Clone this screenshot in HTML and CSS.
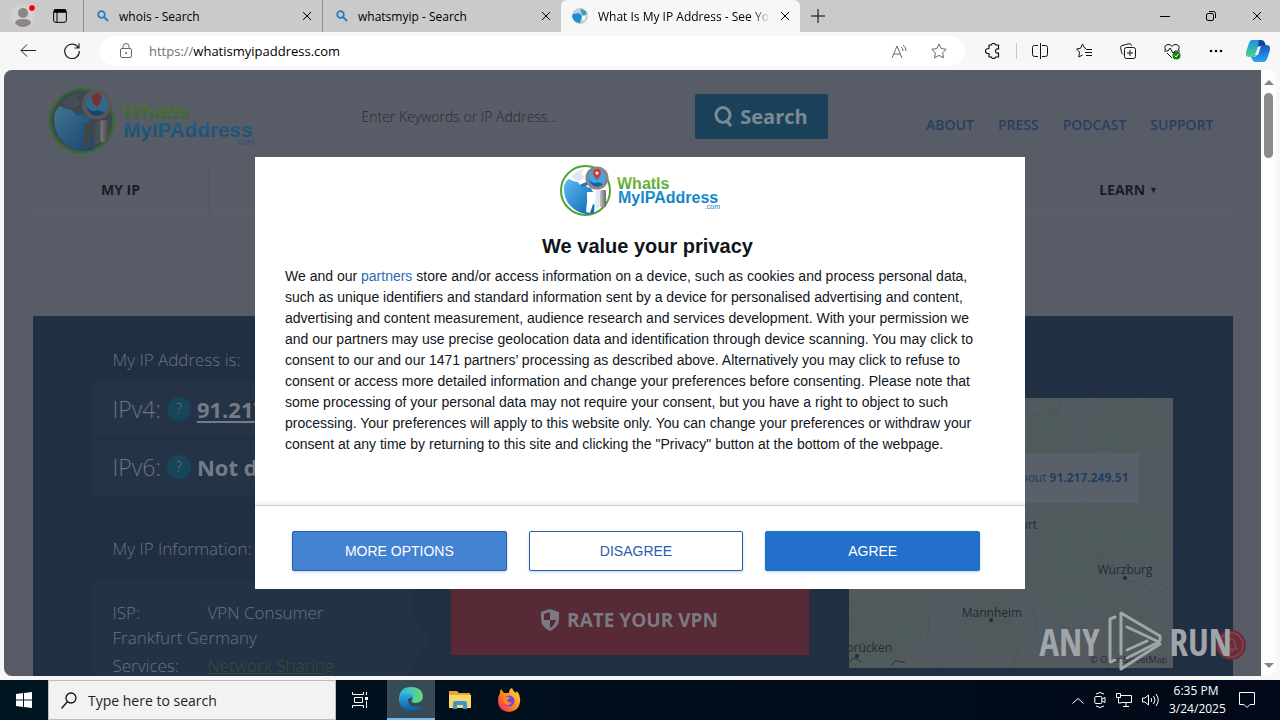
FILE: index.html
```html
<!DOCTYPE html>
<html lang="en">
<head>
    <meta charset="UTF-8">
    <meta name="viewport" content="width=device-width, initial-scale=1.0">
    <title>What Is My IP Address - See Your Public Address</title>
    <link rel="stylesheet" href="styles.css">
</head>
<body>
    <!-- Shared logo -->
    <svg class="defs" aria-hidden="true">
        <defs>
            <linearGradient id="sea" x1="0" y1="0" x2="1" y2="1">
                <stop offset="0" stop-color="#5fbdf0"/>
                <stop offset="1" stop-color="#0b62b4"/>
            </linearGradient>
            <linearGradient id="metal" x1="0" y1="0" x2="1" y2="0">
                <stop offset="0" stop-color="#c9c4c4"/>
                <stop offset="1" stop-color="#6f6466"/>
            </linearGradient>
            <linearGradient id="greenText" x1="0" y1="0" x2="0" y2="1">
                <stop offset="0" stop-color="#8cc63f"/>
                <stop offset="1" stop-color="#3f9a35"/>
            </linearGradient>
            <linearGradient id="blueText" x1="0" y1="0" x2="0" y2="1">
                <stop offset="0" stop-color="#1c9ae0"/>
                <stop offset="1" stop-color="#1272b8"/>
            </linearGradient>
            <linearGradient id="edgeBlue" x1="0" y1="0" x2="0" y2="1">
                <stop offset="0" stop-color="#2bb4e6"/>
                <stop offset="1" stop-color="#0c59a4"/>
            </linearGradient>
            <linearGradient id="edgeGreen" x1="0" y1="0" x2="1" y2="0">
                <stop offset="0" stop-color="#2fb5e8"/>
                <stop offset="1" stop-color="#62dd72"/>
            </linearGradient>
            <linearGradient id="fox" x1="1" y1="0" x2="0" y2="1">
                <stop offset="0" stop-color="#ffe14a"/>
                <stop offset=".5" stop-color="#ff8a1c"/>
                <stop offset="1" stop-color="#f5156c"/>
            </linearGradient>
            <linearGradient id="pilotA" x1="0" y1="0" x2="0" y2="1">
                <stop offset="0" stop-color="#1d8ee8"/>
                <stop offset="1" stop-color="#4fd58a"/>
            </linearGradient>
            <linearGradient id="pilotB" x1="0" y1="0" x2="0" y2="1">
                <stop offset="0" stop-color="#1754c4"/>
                <stop offset="1" stop-color="#2fa4f4"/>
            </linearGradient>
        </defs>
        <symbol id="logo" viewBox="0 0 160 52">
            <circle cx="25.500" cy="25.500" r="24.500" class="globe" stroke="#4aa53a" stroke-width="2"/>
            <path d="M4 21q2-6 5-7l4 2 5 1 2 3 5-2 2 4 4 1 4 8-1 17q-9 3-17-2Q3 38 4 21Z" fill="url(#sea)"/>
            <path d="M11 12q5-7 13-8l-3 5 4 3-5 4-5-1Z" class="land"/>
            <path d="M27 27h9v13l-3-1-3 9-4-1 1-10Z" class="globe"/>
            <path d="m36 26 4-1v16l-2 3-3-2Z" class="land"/>
            <path d="M21 21l7-3" stroke="#2278bb" stroke-width="3"/>
            <circle cx="37" cy="13" r="10" fill="#3aa7e8" stroke="#8b8385" stroke-width="3"/>
            <path d="M29 14q4 6 9 3l5 2q-4 4-9 2-4-2-5-7Z" fill="#1a5f9e"/>
            <path d="M37 15q-4-5-4-7a4 4 0 0 1 8 0q0 2-4 7Z" fill="#d8372c"/>
            <circle cx="37" cy="8" r="1.500" class="globe"/>
            <rect x="40" y="25" width="6" height="17" rx="1" fill="url(#metal)"/>
            <text x="57" y="24" class="logo-word" fill="url(#greenText)">WhatIs</text>
            <text x="58" y="38" class="logo-word" fill="url(#blueText)">MyIPAddress</text>
            <text x="160" y="44" class="logo-com" text-anchor="end" fill="#2380c4">.com</text>
        </symbol>
        <symbol id="close" viewBox="0 0 10 10">
            <path d="m1 1 8 8M9 1 1 9" stroke="currentColor" fill="none"/>
        </symbol>
        <symbol id="lens" viewBox="0 0 12 12">
            <circle cx="4.500" cy="4.500" r="3.300" fill="none" stroke="#2b7cc2" stroke-width="1.800"/>
            <path d="m7 7 4 4" stroke="#2b7cc2" stroke-width="2"/>
        </symbol>
    </svg>

    <!-- Tab strip -->
    <header class="tabs">
        <button class="profile" aria-label="Profile">
            <svg width="24" height="26" viewBox="0 0 24 26"><circle cx="12" cy="13" r="12" fill="#d2d0d0"/><circle cx="12" cy="10" r="5" fill="#8b8583"/><path d="M4 20q0-4 8-4t8 4q-3 4-8 4t-8-4Z" fill="#8b8583"/><circle cx="21" cy="5" r="3.500" fill="#e60012" stroke="#f3dede"/></svg>
        </button>
        <button class="workspaces" aria-label="Tab actions">
            <svg width="14" height="14" viewBox="0 0 14 14" fill="none" stroke="#000"><rect x=".6" y=".6" width="12.800" height="12.800" rx="2.500"/><path d="M1 3h12M4 3v10" /><path d="M1 2h12" stroke-width="3"/></svg>
        </button>
        <div class="tab">
            <svg width="12" height="12"><use href="#lens"/></svg>
            <span>whois - Search</span>
            <button aria-label="Close tab"><svg width="10" height="10"><use href="#close"/></svg></button>
        </div>
        <div class="tab">
            <svg width="12" height="12"><use href="#lens"/></svg>
            <span>whatsmyip - Search</span>
            <button aria-label="Close tab"><svg width="10" height="10"><use href="#close"/></svg></button>
        </div>
        <div class="tab active">
            <svg width="16" height="16" viewBox="0 0 16 16"><circle cx="8" cy="8" r="8" fill="#b9d3d8"/><path d="M1 6l6-1 3 3-2 7Q1 14 0 8Z" fill="#1b8fd0"/><path d="m8 1 4 1-2 4Z" fill="#2d9fc4"/><path d="m10 8 4-1-2 6-2-2Z" fill="#fff"/><circle cx="12" cy="5" r="2.500" fill="#4a9ab3"/></svg>
            <span class="fade">What Is My IP Address - See Your</span>
            <button aria-label="Close tab"><svg width="10" height="10"><use href="#close"/></svg></button>
        </div>
        <button class="new-tab" aria-label="New tab"><svg width="14" height="14" viewBox="0 0 14 14" stroke="#000"><path d="M7 0v14M0 7h14"/></svg></button>
        <div class="window-buttons">
            <button aria-label="Minimize"><svg width="10" height="10" viewBox="0 0 10 10"><path d="M0 5.500h10" stroke="#000"/></svg></button>
            <button aria-label="Restore"><svg width="10" height="10" viewBox="0 0 10 10" fill="none" stroke="#000"><rect x=".5" y="2.500" width="7" height="7" rx="1.500"/><path d="M3 .5h4.500a2 2 0 0 1 2 2V7"/></svg></button>
            <button aria-label="Close"><svg width="10" height="10"><use href="#close"/></svg></button>
        </div>
    </header>

    <!-- Toolbar -->
    <div class="toolbar">
        <button aria-label="Back"><svg width="16" height="14" viewBox="0 0 16 14" fill="none" stroke="#222"><path d="M16 6.500H1M7 .5l-6 6 6 6"/></svg></button>
        <button aria-label="Refresh"><svg width="16" height="16" viewBox="0 0 16 16" fill="none" stroke="#222" stroke-width="1.200"><path d="M14.500 5A7.300 7.300 0 1 0 15.300 8M15 .5V5h-4.500"/></svg></button>
        <div class="address">
            <svg width="12" height="16" viewBox="0 0 12 16" fill="none" stroke="#666"><rect x=".5" y="5.500" width="11" height="9" rx="1.500"/><path d="M3 5V3.500a3 3 0 0 1 6 0V5"/><circle cx="6" cy="10" r=".6" fill="#666"/></svg>
            <a href="#"><span>https://</span>whatismyipaddress.com</a>
            <svg class="read" width="16" height="15" viewBox="0 0 16 15" fill="none" stroke="#666"><path d="m1 14 5-12 5 12M3 10h6M10 3q2 1 2 4M12 1q3 2 3 6"/></svg>
            <svg width="16" height="16" viewBox="0 0 16 16" fill="none" stroke="#666"><path d="m8 1 2.200 4.600 5 .7-3.600 3.500.9 5L8 12.400l-4.500 2.400.9-5L.8 6.300l5-.7Z"/></svg>
        </div>
        <div class="tools">
            <button aria-label="Extensions"><svg width="16" height="16" viewBox="0 0 16 16" fill="none" stroke="#111" stroke-width="1.200"><path d="M4 2h2.500q0-1.500 2-1.500t2 1.500h3v4q-3-.5-3 2t3 2v4h-3q0 1.500-2 1.500t-2-1.500H4v-3.500Q.5 10.500.5 8T4 5.500Z"/></svg></button>
            <i class="rule"></i>
            <button aria-label="Split screen"><svg width="16" height="16" viewBox="0 0 16 16" fill="none" stroke="#111"><path d="M6 2.500H2.500a2 2 0 0 0-2 2v7a2 2 0 0 0 2 2H6M10 2.500h3.500a2 2 0 0 1 2 2v7a2 2 0 0 1-2 2H10M8.500 0v16"/></svg></button>
            <button aria-label="Favorites"><svg width="16" height="16" viewBox="0 0 16 16" fill="none" stroke="#111"><path d="M10 5.500 8.500 5 6.500 1l-2 4.300-4 .7 3 3-.7 5 3.700-2M10 6.500h6M9 9.500h7M10 12.500h6"/></svg></button>
            <button aria-label="Collections"><svg width="16" height="16" viewBox="0 0 16 16" fill="none" stroke="#111"><rect x="4.500" y="4.500" width="11" height="11" rx="2"/><path d="M10 7v6M7 10h6M3 11.500Q2 11 1.500 9L.6 4.500Q.4 3 2 2.500L9 .7q2-.3 2.500 2"/></svg></button>
            <button aria-label="Browser essentials"><svg width="17" height="17" viewBox="0 0 17 17" fill="none" stroke="#111"><path d="M1.500 7Q-.5 2 4 1.500 7 1.300 8 3.500 9 1.300 12 1.500 16.500 2 14.500 7M0 8h4l2-3 3 5 2-2h5M3 10l5 5"/><circle cx="12.500" cy="12.500" r="4" fill="#128016" stroke="none"/><path d="m10.500 12.500 1.500 1.500 2.500-3" stroke="#fff"/></svg></button>
            <button aria-label="Settings"><svg width="14" height="4" viewBox="0 0 14 4"><circle cx="2" cy="2" r="1.300"/><circle cx="7" cy="2" r="1.300"/><circle cx="12" cy="2" r="1.300"/></svg></button>
            <button class="copilot" aria-label="Copilot"><svg width="24" height="22" viewBox="0 0 24 22"><path d="M6 0h9l-4 15q-1 2-3 2H3q-4 0-3-5L3 3q1-3 3-3Z" fill="url(#pilotA)"/><path d="M13 0h2q3 0 4 3l1 3h-8Z" fill="#163f9e"/><path d="M18 22H9q-2 0-3-3l-1-2h3q2 0 3-2l2-8q1-2 3-2h4q5 0 4 5l-3 9q-1 3-3 3Z" fill="url(#pilotB)"/><path d="m12 7-3 8h3l3-9Z" fill="#f2f8ff"/></svg></button>
        </div>
    </div>

    <!-- Web page -->
    <main class="content">
        <div class="page">
            <div class="wrap">
                <div class="site-header">
                    <svg class="site-logo"><use href="#logo"/></svg>
                    <form class="site-search">
                        <input type="text" placeholder="Enter Keywords or IP Address..." aria-label="Enter Keywords or IP Address">
                        <button type="button"><svg width="20" height="22" viewBox="0 0 20 22" fill="none" stroke="#7d8994" stroke-width="3"><ellipse cx="9" cy="9" rx="7" ry="7.500"/><path d="m12 14 5 6"/></svg>Search</button>
                    </form>
                    <div class="top-links">
                        <a href="#">ABOUT</a>
                        <a href="#">PRESS</a>
                        <a href="#">PODCAST</a>
                        <a href="#">SUPPORT</a>
                    </div>
                </div>
                <nav class="site-nav">
                    <a href="#">MY IP</a>
                    <a href="#" class="learn">LEARN <small>▼</small></a>
                </nav>
                <section class="hero">
                    <div class="details">
                        <h3>My IP Address is:</h3>
                        <div class="ip-row">IPv4: <i>?</i> <a href="#">91.217.249.51</a></div>
                        <div class="ip-row">IPv6: <i>?</i> <b>Not detected</b></div>
                        <h3 class="info-title">My IP Information:</h3>
                        <div class="info">
                            <p><span>ISP:</span>VPN Consumer Frankfurt Germany</p>
                            <p class="services"><span>Services:</span><a href="#">Network Sharing</a></p>
                        </div>
                    </div>
                    <button class="rate"><svg width="18" height="22" viewBox="0 0 18 22"><path d="m9 0 9 3v7q0 8-9 12Q0 18 0 10V3Z" fill="#7b7a83"/><path d="M9 3v8H3V5ZM9 11h6q-1 5-6 8Z" fill="#572a35"/></svg>RATE YOUR VPN</button>
                    <div class="map">
                        <svg viewBox="0 0 324 270">
                            <rect width="324" height="270" fill="#525a5f"/>
                            <g fill="#4f5a5b">
                                <path d="M178 20 205 8l18 25-20 30-25 5ZM240 20l50-12 30 30-40 18-35-6ZM195 120l45-10 20 35-12 60-45 15-15-40ZM258 95l50 20 14 38-42 4-30-22ZM130 195l30 12 5 40-30 14-20-26ZM0 200l65-5 14 38-24 30-55 2ZM250 205l50 4 18 42-60 8Z"/>
                            </g>
                            <g fill="none" stroke="#5d5b58" stroke-width="1">
                                <path d="M176 52 205 45l18-28 20-17M243 0l28 22 21 45 32 10M176 130l36-6 32-24 28-37M225 117l15 38 37 22 47 17M277 177l-6 34 8 59M170 200l32-16 34 10 41-17M0 210l34 12 20-14 43 12 23-24 47 10M97 220l-16 50M120 232l42 12 37 26M199 151l-6 45-24 18-7 56M290 144l-13 33 24 30M0 238l40-6 26 38M295 0l-10 35M255 105l24 22 45-5M192 252l42-7 32-25 58 11"/>
                            </g>
                            <g fill="none" stroke="#485460">
                                <path d="M178 25q15-18 24-10 12 5 8-15M245 153q20 9 15 28 7 10 18 4t20 5 26-4M193 198q-15 7-8 20t-6 22-16 30M69 207q15 10 10 26t14 37"/>
                            </g>
                            <path d="M43 267q3-6 9-3h4M0 264q6-8 12 1" fill="none" stroke="#282f38"/>
                            <g class="map-labels">
                                <text x="188" y="131" text-anchor="end">Frankfurt</text>
                                <text x="276" y="176" text-anchor="middle">Würzburg</text>
                                <text x="143" y="219" text-anchor="middle">Mannheim</text>
                                <text x="43" y="254" text-anchor="end">Saarbrücken</text>
                                <text x="318" y="265" text-anchor="end" class="credit">© OpenStreetMap</text>
                                <circle cx="276" cy="180" r="2"/><circle cx="142" cy="222" r="2"/><circle cx="8" cy="258" r="2"/>
                            </g>
                        </svg>
                        <a class="map-tip" href="#">Learn more about <b>91.217.249.51</b></a>
                    </div>
                </section>
            </div>
        </div>
        <div class="scrollbar"><i class="up"></i><i class="thumb"></i><i class="down"></i></div>

        <span class="bell"><svg width="32" height="32" viewBox="0 0 32 32" fill="none" stroke="#87434f" stroke-width="1.500"><circle cx="16" cy="16" r="15" fill="#692e3a" stroke="none"/><circle cx="16" cy="16" r="12"/><path d="M10 20q2-2 2-6 1-4 4-4t4 4q0 4 2 6ZM14 22h4"/></svg></span>

        <!-- ANY.RUN mark -->
        <div class="watermark">
            <span>ANY</span>
            <svg width="56" height="62" viewBox="0 0 56 62" fill="none" stroke="#a0a5a9" stroke-width="3" stroke-linejoin="round" stroke-linecap="round"><path d="M8 7 3 9v43l5-2"/><path d="M14 44V3l39 23v4M14 3v0M20 17l32 15-32 16"/><path d="M14 50v9l39-25M20 40l20-9"/></svg>
            <span>RUN</span>
        </div>

        <!-- Consent dialog -->
        <div class="overlay">
            <div class="dialog" role="dialog" aria-labelledby="consentTitle">
                <svg class="dialog-logo"><use href="#logo"/></svg>
                <div class="dialog-text">
                    <h2 id="consentTitle">We value your privacy</h2>
                    <p>We and our <a href="#">partners</a> store and/or access information on a device, such as cookies and process personal data,<br>
                    such as unique identifiers and standard information sent by a device for personalised advertising and content,<br>
                    advertising and content measurement, audience research and services development. With your permission we<br>
                    and our partners may use precise geolocation data and identification through device scanning. You may click to<br>
                    consent to our and our 1471 partners’ processing as described above. Alternatively you may click to refuse to<br>
                    consent or access more detailed information and change your preferences before consenting. Please note that<br>
                    some processing of your personal data may not require your consent, but you have a right to object to such<br>
                    processing. Your preferences will apply to this website only. You can change your preferences or withdraw your<br>
                    consent at any time by returning to this site and clicking the "Privacy" button at the bottom of the webpage.</p>
                </div>
                <div class="dialog-buttons">
                    <button class="more">MORE OPTIONS</button>
                    <button class="disagree">DISAGREE</button>
                    <button class="agree">AGREE</button>
                </div>
            </div>
        </div>
    </main>

    <!-- Taskbar -->
    <footer class="taskbar">
        <button class="start" aria-label="Start"><svg width="16" height="16" viewBox="0 0 16 16" fill="#fff"><path d="m0 2 7-1v6.500H0ZM8 1l8-1v7.500H8ZM0 8.500h7V15l-7-1ZM8 8.500h8V16l-8-1Z"/></svg></button>
        <label class="task-search">
            <svg width="16" height="17" viewBox="0 0 16 17" fill="none" stroke="#111" stroke-width="1.300"><circle cx="10" cy="6" r="5"/><path d="m6.500 9.500-6 7"/></svg>
            <input type="text" placeholder="Type here to search" aria-label="Type here to search">
        </label>
        <button class="task" aria-label="Task view"><svg width="17" height="16" viewBox="0 0 17 16" fill="none" stroke="#fff"><path d="M.5 0v2.500h11V0M.5 16v-2.500h11V16M2.500 5.500h8v5h-8ZM14.500 0v3M14.500 9v7"/><path d="M13 5h3v3h-3Z" fill="#fff" stroke="none"/></svg></button>
        <button class="task open" aria-label="Edge"><svg width="24" height="24" viewBox="0 0 24 24"><path d="M0 13Q0 0 12 0q11 0 12 9 0 7-8 7-4 0-3-3 2-4-3-5-5 0-6 9-4-1-4-4Z" fill="url(#edgeGreen)"/><path d="M0 12Q2 5 9 6q6 1 5 5-5-1-5 3 1 6 8 6 4 0 6-1-4 5-11 5Q1 24 0 12Z" fill="url(#edgeBlue)"/></svg></button>
        <button class="task" aria-label="File Explorer"><svg width="22" height="18" viewBox="0 0 22 18"><path d="M0 0h8l2 2h11v4H0Z" fill="#e8a33d"/><path d="M0 4h22v13H0Z" fill="#fcd76a"/><path d="M4 18v-6q0-2 2-2h10q2 0 2 2v6h-4v-4H8v4Z" fill="#3f95cf"/></svg></button>
        <button class="task" aria-label="Firefox"><svg width="24" height="24" viewBox="0 0 24 24"><path d="M3 5q0-3 1-4l3 4 5 0q0-4 3-5 1 3 4 5l1-2q4 5 3 11-1 9-11 10Q1 23 1 13q0-5 2-8Z" fill="url(#fox)"/><circle cx="12" cy="13" r="5.500" fill="#7542e5"/><path d="M6 10q4-3 7 0l-3 2q1 3 5 2-3 5-7 2-3-3-2-6Z" fill="#ff8a1c"/></svg></button>
        <div class="tray">
            <svg width="12" height="7" viewBox="0 0 12 7" fill="none" stroke="#fff"><path d="m.5 6.500 5.500-5 5.500 5"/></svg>
            <svg width="12" height="16" viewBox="0 0 12 16" fill="none" stroke="#fff"><rect x=".8" y="4.500" width="7" height="7" rx="1"/><path d="m8 7 3-1.500v5L8 9M2 2q4-3 8 0M2 14q4 3 8 0"/></svg>
            <svg width="16" height="14" viewBox="0 0 16 14" fill="none" stroke="#fff"><path d="M5 2.500h10.500v7H5M10 10v3M7 13.500h6M.5.5h4v4h-4ZM2.500 5v5H5"/></svg>
            <svg width="17" height="14" viewBox="0 0 17 14" fill="none" stroke="#fff"><path d="M.5 5H3l3.500-3v10L3 9H.5ZM9 5q1.500 2 0 4M11.500 3q3 4 0 8M14 1q4.500 6 0 12"/></svg>
            <div class="clock">6:35 PM<br>3/24/2025</div>
            <svg class="action" width="16" height="16" viewBox="0 0 16 16" fill="none" stroke="#fff"><path d="M.5.5h15v12H11l-3 3-3-3H.5Z"/></svg>
        </div>
    </footer>
</body>
</html>
```
FILE: styles.css
```css
* {
    box-sizing: border-box;
}
body {
    margin: 0;
    height: 100vh;
    display: flex;
    flex-direction: column;
    overflow: hidden;
    background: #f7f7f7;
    font-family: "Open Sans", "Noto Sans", sans-serif;
    font-size: 12px;
    color: #000;
}
button {
    display: flex;
    align-items: center;
    justify-content: center;
    padding: 0;
    border: 0;
    background: none;
    font-family: inherit;
    cursor: pointer;
}
svg {
    flex: none;
}
.defs {
    position: absolute;
    width: 0;
    height: 0;
}

/* Tab strip */
.tabs {
    flex: none;
    display: flex;
    height: 32px;
    background: #cacaca;
}
.profile {
    width: 46px;
}
.workspaces {
    width: 28px;
    margin-right: 9px;
}
.tab {
    display: flex;
    align-items: center;
    width: 239px;
    padding: 0 8px 0 13px;
    border-left: 1px solid #8e8e8e;
    white-space: nowrap;
}
.tab span {
    flex: 1;
    margin-left: 10px;
    overflow: hidden;
}
.tab button {
    width: 14px;
}
.tab.active {
    padding-left: 11px;
    border: 0;
    border-radius: 6px 6px 0 0;
    background: #f7f7f7;
}
.tab .fade {
    margin-right: 8px;
    -webkit-mask-image: linear-gradient(to right, #000 90%, transparent);
    mask-image: linear-gradient(to right, #000 90%, transparent);
}
.new-tab {
    width: 36px;
}
.window-buttons {
    display: flex;
    margin-left: auto;
}
.window-buttons button {
    width: 46px;
}

/* Toolbar */
.toolbar {
    flex: none;
    display: flex;
    align-items: center;
    height: 38px;
    padding: 0 8px 0 6px;
}
.toolbar > button {
    width: 44px;
    height: 30px;
}
.address {
    flex: 1;
    display: flex;
    align-items: center;
    height: 30px;
    margin-left: 6px;
    padding: 0 18px 0 20px;
    border-radius: 15px;
    background: #fff;
}
.address a {
    margin-left: 17px;
    font-size: 13px;
    color: #000;
    text-decoration: none;
}
.address a span {
    color: #707070;
}
.address .read {
    margin: 0 24px 0 auto;
}
.tools {
    display: flex;
    align-items: center;
    margin-left: 6px;
}
.tools button {
    width: 44px;
}
.tools .rule {
    width: 1px;
    height: 16px;
    margin: 0 1px;
    background: #c8c8c8;
}
.tools .copilot {
    width: 28px;
    margin-left: 6px;
}

/* Page area */
.content {
    position: relative;
    flex: 1;
    display: flex;
    min-height: 0;
    padding: 0 4px 4px;
}
.page {
    flex: 1;
    overflow: hidden;
    border-radius: 8px 0 0 8px;
    background: #575c66;
}
.wrap {
    max-width: 1200px;
    margin: 0 auto;
}
.scrollbar {
    display: flex;
    flex-direction: column;
    align-items: center;
    width: 15px;
    padding: 10px 0 8px;
    border-radius: 0 8px 8px 0;
    background: #fdfdfd;
}
.scrollbar .up,
.scrollbar .down {
    border: 5px solid transparent;
    border-top: 0;
    border-bottom-color: #858585;
}
.scrollbar .down {
    margin-top: auto;
    transform: rotate(180deg);
}
.scrollbar .thumb {
    width: 9px;
    height: 65px;
    margin-top: 8px;
    border-radius: 5px;
    background: #8b8b8b;
}

/* Logo */
.globe {
    fill: var(--globe, #fff);
}
.land {
    fill: var(--land, #dbeaf4);
}
.logo-word {
    font: bold 16px "Liberation Sans", Arial, sans-serif;
}
.logo-com {
    font: 7px "Liberation Sans", Arial, sans-serif;
}

/* Site header */
.site-header {
    display: flex;
    align-items: flex-start;
    height: 95px;
    padding: 18px 19px 0 16px;
}
.site-logo {
    --globe: #596571;
    --land: #677684;
    width: 206px;
    height: 67px;
    filter: brightness(.65);
    opacity: .8;
}
.site-search {
    display: flex;
    width: 482px;
    height: 45px;
    margin: 6px 0 0 91px;
}
.site-search input {
    flex: 1;
    min-width: 0;
    padding: 0 15px;
    border: 1px solid #545963;
    background: #585d67;
    font: 300 14px "Open Sans", sans-serif;
}
.site-search input::placeholder {
    color: #252b35;
}
.site-search button {
    gap: 6px;
    width: 133px;
    border-radius: 2px;
    background: #1a425b;
    color: #7d8994;
    font-size: 20px;
    font-weight: 700;
}
.top-links {
    display: flex;
    gap: 24px;
    margin: 27px 0 0 auto;
    font-size: 14px;
    line-height: 20px;
    font-weight: 600;
}
.top-links a {
    color: #273f60;
    text-decoration: none;
}
.site-nav {
    display: flex;
    justify-content: space-between;
    height: 51px;
    border: 1px solid #5a5f69;
    background: #585d67;
}
.site-nav a {
    width: 176px;
    border-right: 2px solid #555a64;
    color: #171d2b;
    font-size: 14px;
    font-weight: 700;
    line-height: 48px;
    text-align: center;
    text-decoration: none;
}
.site-nav .learn {
    width: 206px;
    border: 0;
}
.site-nav small {
    font-size: 9px;
    vertical-align: 2px;
}

/* IP details */
.hero {
    display: grid;
    grid-template-columns: 318fr 358fr 324fr;
    align-items: start;
    gap: 40px;
    min-height: 420px;
    margin-top: 100px;
    padding: 0 60px;
    background: #203042;
    color: #6c7480;
}
.details {
    padding-top: 30px;
}
.details h3 {
    margin: 0 0 7px 20px;
    font-size: 17px;
    font-weight: 300;
    line-height: 28px;
}
.ip-row {
    display: flex;
    align-items: center;
    height: 56px;
    margin-bottom: 2px;
    padding-left: 20px;
    background: #243346;
    font-size: 23px;
    font-weight: 300;
    white-space: nowrap;
}
.ip-row i {
    width: 24px;
    height: 24px;
    margin: 0 6px;
    border-radius: 50%;
    background: #17455a;
    font-size: 14px;
    font-style: normal;
    line-height: 24px;
    text-align: center;
}
.ip-row a,
.ip-row b {
    color: #747c87;
    font-size: 22px;
    font-weight: 700;
    text-underline-offset: 3px;
}
.details .info-title {
    margin-top: 40px;
    margin-bottom: 17px;
}
.info {
    position: relative;
    padding: 20px;
    background: #233245;
    font-size: 17px;
    font-weight: 300;
    line-height: 25px;
}
.info::after {
    content: "";
    position: absolute;
    top: 36px;
    left: 100%;
    border: 24px solid transparent;
    border-right: 0;
    border-left: 22px solid #233245;
}
.info p {
    margin: 0 0 3px;
}
.info p span {
    display: inline-block;
    width: 95px;
}
.info a {
    color: #354f38;
}
.rate {
    gap: 8px;
    height: 70px;
    margin-top: 269px;
    border: 1px solid #652436;
    background: #572a35;
    color: #7b7a83;
    font-size: 19px;
    font-weight: 700;
}
.map {
    position: relative;
    margin-top: 82px;
}
.map > svg {
    display: block;
    width: 100%;
}
.map-labels {
    fill: #242b36;
    font-size: 12px;
}
.map-labels .credit {
    font-size: 9px;
}
.map-tip {
    position: absolute;
    top: 55px;
    right: 34px;
    padding: 0 10px;
    background: #596069;
    color: #233e5e;
    font-size: 12px;
    line-height: 50px;
    text-decoration: none;
    white-space: nowrap;
}
.bell {
    position: absolute;
    right: 33px;
    bottom: 15px;
}
.watermark {
    position: absolute;
    right: 48px;
    bottom: 8px;
    display: flex;
    align-items: center;
    gap: 7px;
    color: #a0a5a9;
    font: 300 37px "Open Sans Condensed", "Roboto Condensed", "Liberation Sans Narrow", sans-serif;
}

/* Consent dialog */
.overlay {
    position: absolute;
    inset: 0 0 4px;
    display: flex;
    align-items: center;
    justify-content: center;
}
.dialog {
    display: flex;
    flex-direction: column;
    width: 770px;
    overflow: hidden;
    background: #fff;
    font-family: "Liberation Sans", Arial, sans-serif;
    color: #10151c;
}
.dialog-logo {
    align-self: center;
    width: 160px;
    height: 52px;
    margin-top: 8px;
}
.dialog-text {
    padding: 16px 15px 50px 30px;
}
.dialog h2 {
    margin: 0 0 7px;
    font-size: 20px;
    line-height: 26px;
    text-align: center;
}
.dialog p {
    margin: 0;
    font-size: 14px;
    line-height: 21px;
    white-space: nowrap;
}
.dialog p a {
    color: #2b6cb0;
    text-decoration: none;
}
.dialog-buttons {
    display: flex;
    gap: 22px;
    padding: 25px 45px 18px 37px;
    border-top: 1px solid #d0d0d0;
    box-shadow: 0 -2px 3px #ececec;
}
.dialog-buttons button {
    flex: 1;
    height: 40px;
    border: 1px solid #2c5f9f;
    border-radius: 2px;
    box-shadow: 0 1px 3px #bcd3ec;
    font-size: 14px;
}
.more {
    background: #4482d2;
    color: #fff;
}
.disagree {
    background: #fff;
    color: #2560ae;
}
.dialog-buttons .agree {
    border-color: #2370cc;
    background: #2370cc;
    color: #fff;
}

/* Taskbar */
.taskbar {
    flex: none;
    display: flex;
    height: 40px;
    background: linear-gradient(to right, #001520, #020817);
    color: #fff;
}
.start {
    width: 48px;
}
.task-search {
    display: flex;
    align-items: center;
    gap: 11px;
    width: 288px;
    padding-left: 12px;
    border: 1px solid #bdbdbd;
    background: #f2f2f2;
}
.task-search input {
    flex: 1;
    min-width: 0;
    padding: 0;
    border: 0;
    background: none;
    font: 14px "Open Sans", sans-serif;
}
.task-search input::placeholder {
    color: #222;
}
.task {
    width: 49px;
}
.task.open {
    width: 48px;
    margin-left: 2px;
    border-bottom: 2px solid #76b9ed;
    background: #384a54;
}
.tray {
    display: flex;
    align-items: center;
    gap: 10px;
    margin-left: auto;
    padding-right: 25px;
}
.clock {
    width: 54px;
    line-height: 18px;
    text-align: center;
}
.action {
    margin-left: 6px;
}
```
